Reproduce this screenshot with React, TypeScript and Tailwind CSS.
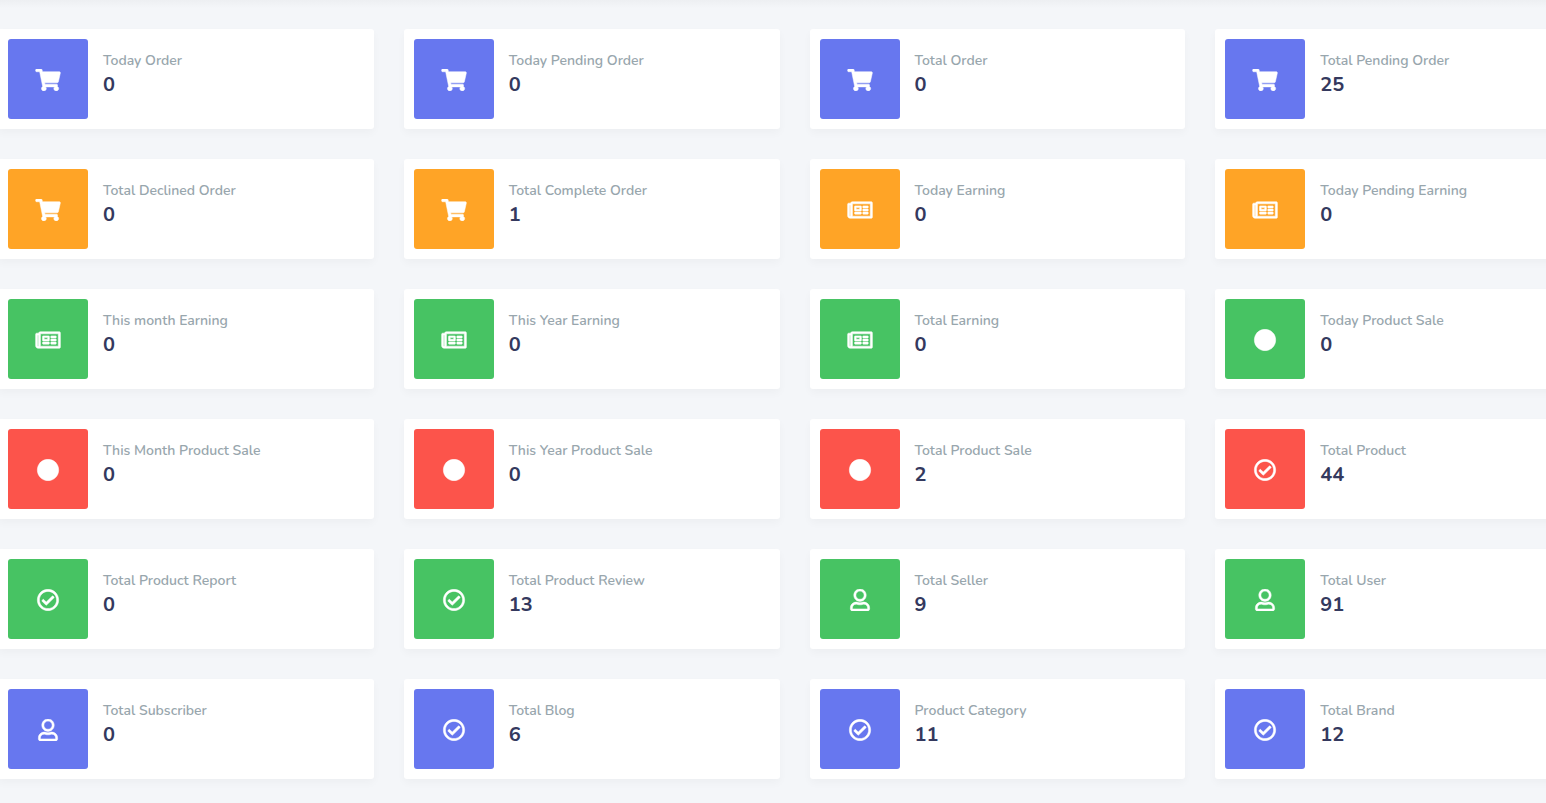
import type { IconType } from "react-icons";
import {
  FaCircle,
  FaRegCheckCircle,
  FaRegNewspaper,
  FaRegUser,
  FaShoppingCart,
} from "react-icons/fa";

interface Stat {
  label: string;
  value: number;
  icon: IconType;
  tone: string;
}

const primary = "bg-[#6777ef]";
const warning = "bg-[#ffa426]";
const success = "bg-[#47c363]";
const danger = "bg-[#fc544b]";

const stats: Stat[] = [
  { label: "Today Order", value: 0, icon: FaShoppingCart, tone: primary },
  { label: "Today Pending Order", value: 0, icon: FaShoppingCart, tone: primary },
  { label: "Total Order", value: 0, icon: FaShoppingCart, tone: primary },
  { label: "Total Pending Order", value: 25, icon: FaShoppingCart, tone: primary },
  { label: "Total Declined Order", value: 0, icon: FaShoppingCart, tone: warning },
  { label: "Total Complete Order", value: 1, icon: FaShoppingCart, tone: warning },
  { label: "Today Earning", value: 0, icon: FaRegNewspaper, tone: warning },
  { label: "Today Pending Earning", value: 0, icon: FaRegNewspaper, tone: warning },
  { label: "This month Earning", value: 0, icon: FaRegNewspaper, tone: success },
  { label: "This Year Earning", value: 0, icon: FaRegNewspaper, tone: success },
  { label: "Total Earning", value: 0, icon: FaRegNewspaper, tone: success },
  { label: "Today Product Sale", value: 0, icon: FaCircle, tone: success },
  { label: "This Month Product Sale", value: 0, icon: FaCircle, tone: danger },
  { label: "This Year Product Sale", value: 0, icon: FaCircle, tone: danger },
  { label: "Total Product Sale", value: 2, icon: FaCircle, tone: danger },
  { label: "Total Product", value: 44, icon: FaRegCheckCircle, tone: danger },
  { label: "Total Product Report", value: 0, icon: FaRegCheckCircle, tone: success },
  { label: "Total Product Review", value: 13, icon: FaRegCheckCircle, tone: success },
  { label: "Total Seller", value: 9, icon: FaRegUser, tone: success },
  { label: "Total User", value: 91, icon: FaRegUser, tone: success },
  { label: "Total Subscriber", value: 0, icon: FaRegUser, tone: primary },
  { label: "Total Blog", value: 6, icon: FaRegCheckCircle, tone: primary },
  { label: "Product Category", value: 11, icon: FaRegCheckCircle, tone: primary },
  { label: "Total Brand", value: 12, icon: FaRegCheckCircle, tone: primary },
];

function StatCard({ label, value, icon: Icon, tone }: Stat) {
  return (
    <article className="flex gap-[15px] rounded-[3px] bg-white p-[10px] shadow-[0_4px_8px_rgba(0,0,0,0.03)]">
      <div className={`flex size-20 shrink-0 items-center justify-center rounded-[3px] pt-0.5 text-white ${tone}`}>
        <Icon className="h-[22px] w-[26px] stroke-current stroke-[12]" aria-hidden="true" />
      </div>
      <div className="min-w-0 pt-3">
        <h4 className="text-sm leading-5 font-semibold text-[#98a6ad]">{label}</h4>
        <p className="text-xl leading-7 font-bold text-[#34395e]">{value}</p>
      </div>
    </article>
  );
}

export default function App() {
  return (
    <main className="min-h-screen overflow-hidden bg-[#f4f6f9] font-[Nunito,'Open_Sans',sans-serif]">
      <div className="h-2 bg-linear-to-b from-[#edeff2] to-[#f4f6f9]" />
      <section
        aria-label="Statistics"
        className="-ml-0.5 grid w-[calc(100%+47px)] grid-cols-4 gap-[30px] pt-[21px] pb-6"
      >
        {stats.map((stat) => (
          <StatCard key={stat.label} {...stat} />
        ))}
      </section>
    </main>
  );
}
